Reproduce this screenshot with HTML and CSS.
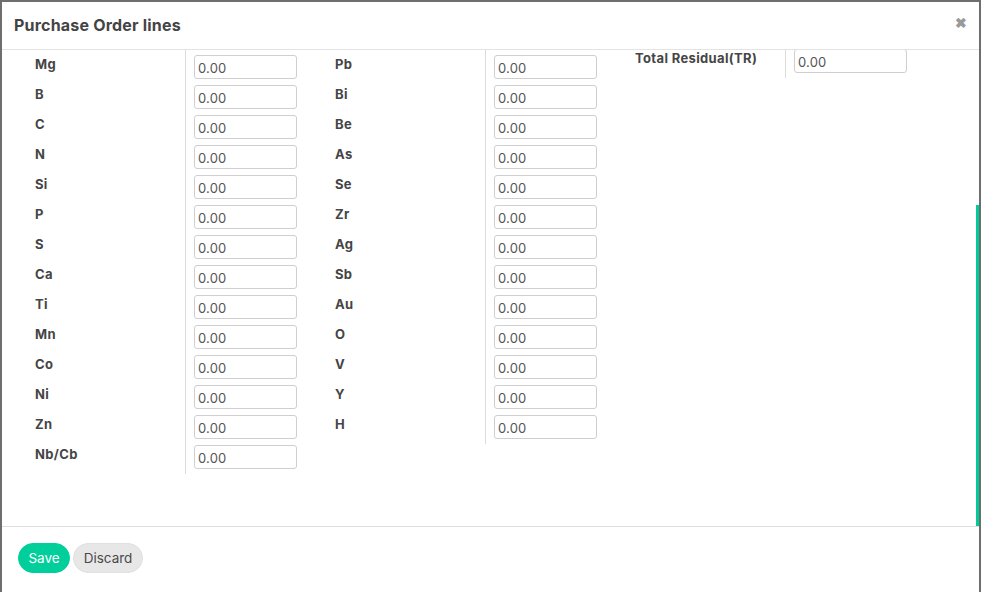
FILE: index.html
```html
<!DOCTYPE html>
<html>
<head>
<meta charset="utf-8">
<link rel="stylesheet" href="styles.css">
</head>
<body>
<div class="backdrop">
  <div class="modal">
    <div class="modal-header">
      <h4 class="modal-title">Purchase Order lines</h4>
      <span class="close">&#10006;</span>
    </div>
    <div class="modal-body">
      <div class="group">
        <div class="labels">
          <div class="lbl">Mg</div><div class="lbl">B</div><div class="lbl">C</div><div class="lbl">N</div>
          <div class="lbl">Si</div><div class="lbl">P</div><div class="lbl">S</div><div class="lbl">Ca</div>
          <div class="lbl">Ti</div><div class="lbl">Mn</div><div class="lbl">Co</div><div class="lbl">Ni</div>
          <div class="lbl">Zn</div><div class="lbl">Nb/Cb</div>
        </div>
        <div class="fields">
          <div class="cell"><input class="inp" value="0.00"></div><div class="cell"><input class="inp" value="0.00"></div>
          <div class="cell"><input class="inp" value="0.00"></div><div class="cell"><input class="inp" value="0.00"></div>
          <div class="cell"><input class="inp" value="0.00"></div><div class="cell"><input class="inp" value="0.00"></div>
          <div class="cell"><input class="inp" value="0.00"></div><div class="cell"><input class="inp" value="0.00"></div>
          <div class="cell"><input class="inp" value="0.00"></div><div class="cell"><input class="inp" value="0.00"></div>
          <div class="cell"><input class="inp" value="0.00"></div><div class="cell"><input class="inp" value="0.00"></div>
          <div class="cell"><input class="inp" value="0.00"></div><div class="cell"><input class="inp" value="0.00"></div>
        </div>
      </div>
      <div class="group">
        <div class="labels">
          <div class="lbl">Pb</div><div class="lbl">Bi</div><div class="lbl">Be</div><div class="lbl">As</div>
          <div class="lbl">Se</div><div class="lbl">Zr</div><div class="lbl">Ag</div><div class="lbl">Sb</div>
          <div class="lbl">Au</div><div class="lbl">O</div><div class="lbl">V</div><div class="lbl">Y</div>
          <div class="lbl">H</div>
        </div>
        <div class="fields">
          <div class="cell"><input class="inp" value="0.00"></div><div class="cell"><input class="inp" value="0.00"></div>
          <div class="cell"><input class="inp" value="0.00"></div><div class="cell"><input class="inp" value="0.00"></div>
          <div class="cell"><input class="inp" value="0.00"></div><div class="cell"><input class="inp" value="0.00"></div>
          <div class="cell"><input class="inp" value="0.00"></div><div class="cell"><input class="inp" value="0.00"></div>
          <div class="cell"><input class="inp" value="0.00"></div><div class="cell"><input class="inp" value="0.00"></div>
          <div class="cell"><input class="inp" value="0.00"></div><div class="cell"><input class="inp" value="0.00"></div>
          <div class="cell"><input class="inp" value="0.00"></div>
        </div>
      </div>
      <div class="group group-tr">
        <div class="labels">
          <div class="lbl">Total Residual(TR)</div>
        </div>
        <div class="fields">
          <div class="cell"><input class="inp inp-wide" value="0.00"></div>
        </div>
      </div>
      <div class="scroll-thumb"></div>
    </div>
    <div class="modal-footer">
      <button class="btn btn-save">Save</button>
      <button class="btn btn-discard">Discard</button>
    </div>
  </div>
</div>
</body>
</html>
```
FILE: styles.css
```css
html, body {
  margin: 0;
  height: 592px;
  overflow: hidden;
}
body {
  background: #6e6e6e;
  font-family: Inter, "Open Sans", sans-serif;
}
.backdrop {
  padding: 2px 2px 0 2px;
  height: 590px;
}
.modal {
  background: #fff;
  height: 590px;
  display: flex;
  flex-direction: column;
}
.modal-header {
  height: 48px;
  box-sizing: border-box;
  border-bottom: 1px solid #e3e3e3;
  display: flex;
  align-items: center;
  justify-content: space-between;
  padding: 0 12px 2px 12px;
  flex: none;
}
.modal-title {
  margin: 0;
  font-size: 16px;
  font-weight: 700;
  color: #444;
  letter-spacing: 0.2px;
}
.close {
  color: #9a9a9a;
  font-size: 14px;
  font-weight: 700;
  margin-top: -4px;
}
.modal-body {
  flex: 1;
  display: flex;
  align-items: flex-start;
  padding-left: 18px;
  overflow: hidden;
  position: relative;
}
.group {
  width: 300px;
  display: flex;
  flex: none;
}
.group-tr {
  margin-top: -6px;
}
.labels {
  width: 166px;
  box-sizing: border-box;
  border-right: 1px solid #dcdcdc;
  padding-bottom: 4px;
}
.lbl {
  height: 30px;
  box-sizing: border-box;
  padding: 5px 0 0 15px;
  font-size: 13px;
  line-height: 18px;
  font-weight: 700;
  color: #454545;
  letter-spacing: 0.35px;
}
.fields {
  padding-left: 8px;
}
.cell {
  height: 30px;
  box-sizing: border-box;
  padding-top: 5px;
}
.inp {
  display: block;
  width: 103px;
  height: 24px;
  box-sizing: border-box;
  margin: 0;
  border: 1px solid #cfcfcf;
  border-radius: 3px;
  padding: 2px 3px 0 3px;
  font-family: Inter, "Open Sans", sans-serif;
  font-size: 13px;
  color: #555;
  background: #fff;
  outline: none;
  letter-spacing: 0.2px;
}
.inp-wide {
  width: 113px;
}
.scroll-thumb {
  position: absolute;
  right: 0;
  top: 155px;
  width: 3px;
  height: 321px;
  background: #00cc99;
}
.modal-footer {
  flex: none;
  height: 66px;
  box-sizing: border-box;
  border-top: 1px solid #dedede;
  display: flex;
  align-items: flex-start;
  gap: 3px;
  padding: 16px 0 0 16px;
}
.btn {
  height: 30px;
  border-radius: 15px;
  font-family: Inter, "Open Sans", sans-serif;
  font-size: 13.5px;
  padding: 0;
  cursor: pointer;
}
.btn-save {
  width: 52px;
  background: #00cf9c;
  color: #fff;
  border: 1px solid #00cf9c;
}
.btn-discard {
  width: 70px;
  background: #e7e7e7;
  color: #4a4a4a;
  border: 1px solid #e0e0e0;
}
```
